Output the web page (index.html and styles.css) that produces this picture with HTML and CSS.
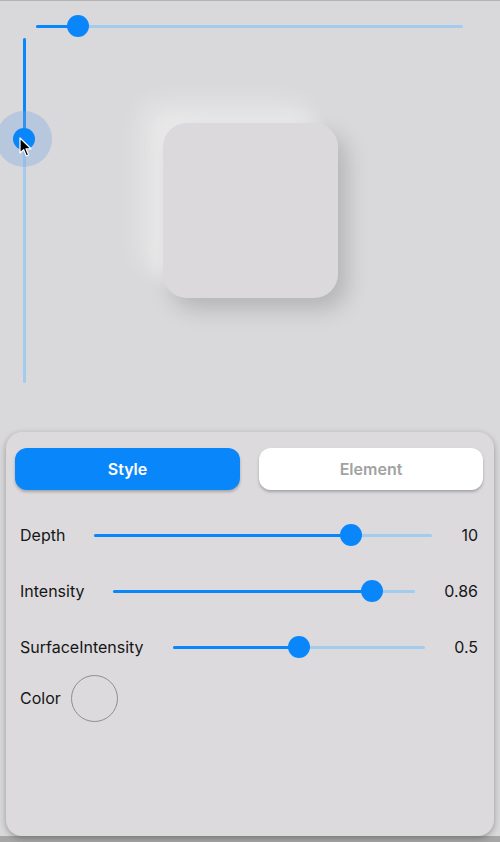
FILE: index.html
```html
<!DOCTYPE html>
<html lang="en">
<head>
  <meta charset="UTF-8">
  <meta name="viewport" content="width=device-width, initial-scale=1.0">
  <title>Neumorphic Playground</title>
  <link rel="stylesheet" href="styles.css">
</head>
<body>

<div class="app">

  <!-- preview area: light source sliders + the element -->
  <section class="stage">
    <div class="slider hslider">
      <div class="track"></div>
      <div class="fill" style="width:9.8%"></div>
      <div class="thumb" style="left:9.8%"></div>
    </div>

    <div class="stage-body">
      <div class="vslider">
        <div class="vtrack"></div>
        <div class="vfill" style="height:29.3%"></div>
        <div class="halo" style="top:29.3%"></div>
        <div class="thumb" style="top:29.3%"></div>
        <svg class="cursor" style="top:29.3%" width="14" height="21" viewBox="0 0 14 21">
          <path d="M1 1 L1 16 L4.6 12.6 L7.3 19 L9.6 18 L7 11.8 L12 11.8 Z" fill="#000" stroke="#fff" stroke-width="1.2" stroke-linejoin="round"/>
        </svg>
      </div>
      <div class="neu-box"></div>
    </div>
  </section>

  <!-- settings panel -->
  <section class="panel">
    <div class="tabs">
      <button class="tab active">Style</button>
      <button class="tab">Element</button>
    </div>

    <div class="row">
      <span class="label">Depth</span>
      <div class="slider">
        <div class="track"></div>
        <div class="fill" style="width:75.9%"></div>
        <div class="thumb" style="left:75.9%"></div>
      </div>
      <span class="value">10</span>
    </div>

    <div class="row">
      <span class="label">Intensity</span>
      <div class="slider">
        <div class="track"></div>
        <div class="fill" style="width:85.7%"></div>
        <div class="thumb" style="left:85.7%"></div>
      </div>
      <span class="value">0.86</span>
    </div>

    <div class="row">
      <span class="label">SurfaceIntensity</span>
      <div class="slider">
        <div class="track"></div>
        <div class="fill" style="width:50%"></div>
        <div class="thumb" style="left:50%"></div>
      </div>
      <span class="value">0.5</span>
    </div>

    <div class="row color-row">
      <span class="label">Color</span>
      <div class="swatch"></div>
    </div>
  </section>

</div>

</body>
</html>
```

FILE: styles.css
```css
:root {
  --blue: #0a86fb;
  --blue-light: #a3cbee;
  --bg: #d9d8da;
  --panel: #dcdadd;
  --text: #161616;
}
* { box-sizing: border-box; }
body {
  margin: 0;
  background: var(--bg);
  font-family: Inter, "Open Sans", sans-serif;
  color: var(--text);
  border-top: 1px solid #b3b3b3;
}
.app {
  height: 841px;
  display: flex;
  flex-direction: column;
  background: linear-gradient(to bottom, var(--bg) 835px, #a6a6a6 835px);
}

/* ---------- stage ---------- */
.stage {
  height: 431px;
  display: flex;
  flex-direction: column;
}
.hslider {
  margin: 14px 37px 0 36px;
  flex: none !important;
}
.stage-body {
  flex: 1;
  display: grid;
  grid-template-columns: 48px 1fr 48px;
}
.vslider {
  position: relative;
  margin-top: 1px;
  height: 345px;
}
.vtrack, .vfill {
  position: absolute;
  left: 23px;
  top: 0;
  width: 3px;
  border-radius: 2px;
}
.vtrack { height: 100%; background: var(--blue-light); }
.vfill { background: var(--blue); }
.vslider .thumb { left: 24px; }
.halo {
  position: absolute;
  left: 24px;
  width: 56px;
  height: 56px;
  border-radius: 50%;
  background: rgba(120, 170, 225, 0.35);
  transform: translate(-50%, -50%);
}
.cursor {
  position: absolute;
  left: 19px;
  margin-top: -2px;
}
.neu-box {
  justify-self: center;
  margin-top: 86px;
  width: 175px;
  height: 175px;
  border-radius: 24px;
  background: #dbd9dc;
  box-shadow: -26px -24px 22px rgba(255, 255, 255, 0.28),
              -12px -10px 12px rgba(255, 255, 255, 0.2),
              9px 11px 22px rgba(0, 0, 0, 0.17);
}

/* ---------- slider ---------- */
.slider {
  position: relative;
  flex: 1;
  height: 22px;
}
.track, .fill {
  position: absolute;
  left: 0;
  top: 10px;
  height: 3px;
  border-radius: 2px;
}
.track { width: 100%; background: var(--blue-light); }
.fill { background: var(--blue); }
.thumb {
  position: absolute;
  top: 11px;
  width: 22px;
  height: 22px;
  border-radius: 50%;
  background: var(--blue);
  transform: translate(-50%, -50%);
}
.vslider .thumb { top: auto; }

/* ---------- panel ---------- */
.panel {
  flex: none;
  height: 404px;
  margin: 0 6px;
  padding: 16px 11px 0 9px;
  background: var(--panel);
  border-radius: 16px;
  box-shadow: 0 2px 6px rgba(0, 0, 0, 0.3);
}
.tabs {
  display: grid;
  grid-template-columns: 225px 224px;
  column-gap: 19px;
  margin-bottom: 17px;
}
.tab {
  height: 42px;
  border: none;
  border-radius: 12px;
  font-family: inherit;
  font-size: 16px;
  font-weight: 600;
  background: #fff;
  color: #a2a2a2;
  box-shadow: 0 2px 3px rgba(0, 0, 0, 0.25);
}
.tab.active {
  background: var(--blue);
  color: #fff;
}
.row {
  display: flex;
  align-items: center;
  gap: 29px;
  height: 56px;
  padding: 0 5px;
  font-size: 16px;
}
.value { text-align: right; }
.color-row {
  height: 46px;
  gap: 10px;
}
.swatch {
  width: 47px;
  height: 47px;
  border-radius: 50%;
  border: 1px solid #8e8e8e;
}
```
